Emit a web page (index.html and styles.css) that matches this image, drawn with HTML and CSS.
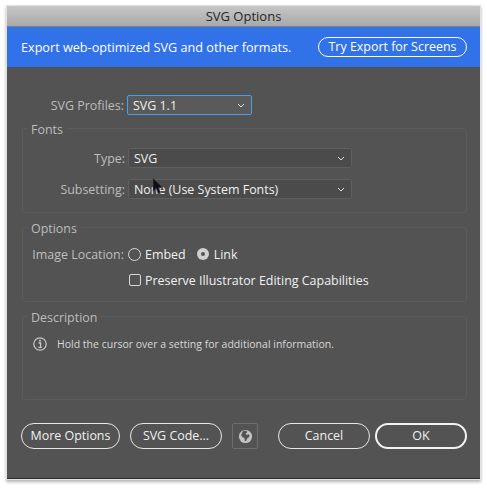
FILE: index.html
```html
<!DOCTYPE html>
<html lang="en">
<head>
<meta charset="utf-8">
<title>SVG Options</title>
<link rel="stylesheet" href="styles.css">
</head>
<body>
<div class="window">
  <div class="titlebar">SVG Options</div>
  <div class="banner">
    <span class="banner-text">Export web-optimized SVG and other formats.</span>
    <span class="banner-btn">Try Export for Screens</span>
  </div>
  <div class="content">
    <div class="row profile-row">
      <span class="label">SVG Profiles:</span>
      <div class="select select-short select-focus"><span>SVG 1.1</span><svg class="chev" viewBox="0 0 8 5"><path d="M1 1l3 3 3-3"/></svg></div>
    </div>
    <section class="group group-fonts">
      <h2 class="legend">Fonts</h2>
      <div class="row">
        <span class="label">Type:</span>
        <div class="select"><span>SVG</span><svg class="chev" viewBox="0 0 8 5"><path d="M1 1l3 3 3-3"/></svg></div>
      </div>
      <div class="row row-second">
        <span class="label">Subsetting:</span>
        <div class="select"><span>None (Use System Fonts)</span><svg class="chev" viewBox="0 0 8 5"><path d="M1 1l3 3 3-3"/></svg></div>
      </div>
    </section>
    <section class="group group-options">
      <h2 class="legend">Options</h2>
      <div class="row">
        <span class="label label-dim">Image Location:</span>
        <span class="radio"></span><span class="opt opt-embed">Embed</span>
        <span class="radio radio-on"></span><span class="opt">Link</span>
      </div>
      <div class="row row-check">
        <span class="check"></span><span class="opt">Preserve Illustrator Editing Capabilities</span>
      </div>
    </section>
    <section class="group group-desc">
      <h2 class="legend">Description</h2>
      <div class="info">
        <svg class="info-icon" viewBox="0 0 16 16"><circle cx="8" cy="8" r="6.2"/><path class="info-i" d="M6.6 7h2v4.2M6.4 11.4h3.4"/><circle class="info-dot" cx="8" cy="4.8" r="1"/></svg>
        <span>Hold the cursor over a setting for additional information.</span>
      </div>
    </section>
    <div class="actions">
      <span class="btn btn-more">More Options</span>
      <span class="btn btn-code">SVG Code...</span>
      <span class="globe"><svg viewBox="0 0 16 16"><circle class="globe-sea" cx="8" cy="8" r="7"/><path class="globe-land" d="M5.5 2.2l3.5-.4.8 1.8-1.6 1.2.9 1.5 2.2-.6 1.2 1.6-1.6 2.4-1.3.4-1 3-1.4-.6-.4-3L5 8.7 3.4 6.8 4 4.4z"/></svg></span>
      <span class="btn btn-cancel">Cancel</span>
      <span class="btn btn-ok">OK</span>
    </div>
  </div>
</div>
<svg class="cursor" viewBox="0 0 12 18"><path d="M1 1v13.5l3.2-3 2.1 5 2.3-1-2.1-4.8h4.4z"/></svg>
</body>
</html>
```
FILE: styles.css
```css
* { box-sizing: border-box; }
html, body { margin: 0; padding: 0; }
body {
  width: 487px;
  height: 488px;
  background: #fff;
  padding: 6px 7px 0;
  font-family: "Open Sans", sans-serif;
  font-size: 12.45px;
  overflow: hidden;
  position: relative;
}
.window {
  width: 473px;
  height: 473px;
  background: #535353;
  border-bottom: 1px solid #2b2b2b;
  box-shadow: 0 0 0 1px #e2e2e2, 0 2px 3px 1px rgba(0,0,0,.3);
  display: flex;
  flex-direction: column;
}
.titlebar {
  height: 21px;
  background: linear-gradient(#c6c6c6, #a9a9a9);
  border-bottom: 1px solid #808080;
  color: #262626;
  text-align: center;
  font-size: 13px;
  line-height: 20px;
}
.banner {
  height: 40px;
  background: #3272e8;
  color: #fff;
  display: flex;
  align-items: center;
  justify-content: space-between;
  padding: 0 13px 0 14px;
}
.banner-text { font-size: 12.65px; }
.banner-btn {
  width: 149px;
  height: 20px;
  border: 1px solid #fff;
  border-radius: 10px;
  text-align: center;
  line-height: 17px;
}
.content {
  flex: 1;
  padding: 28px 13px 0 15px;
  color: #e4e4e4;
}
.row { display: flex; align-items: center; height: 20px; }
.label {
  width: 105px;
  padding-right: 3px;
  text-align: right;
  color: #bdbdbd;
  flex: none;
}
.label-dim { padding-right: 4px; }
.select {
  width: 224px;
  height: 20px;
  background: #4b4b4b;
  border: 1px solid #5f5f5f;
  border-radius: 2px;
  color: #f0f0f0;
  display: flex;
  align-items: center;
  justify-content: space-between;
  padding: 0 6px 0 5px;
  line-height: 17px;
}
.select-short { width: 125px; background: #5a5a5a; }
.select-focus { border-color: #4a9de8; }
.chev { width: 8px; height: 5px; fill: none; stroke: #ddd; stroke-width: 1; }
.profile-row { margin-bottom: 13px; }
.group {
  position: relative;
  border: 1px solid #5c5c5c;
  border-radius: 3px;
}
.legend {
  position: absolute;
  top: -8px;
  left: 4px;
  margin: 0;
  padding: 0 4px;
  background: #535353;
  font-size: 12.45px;
  font-weight: 400;
  line-height: 17px;
  color: #bdbdbd;
}
.group-fonts { height: 85px; padding: 19px 0 0; margin-bottom: 14px; }
.group-options { height: 75px; padding: 16px 0 0; margin-bottom: 14px; }
.group-desc { height: 84px; padding: 19px 0 0 9px; margin-bottom: 23px; }
.row-second { margin-top: 11px; }
.row-check { margin-top: 6px; padding-left: 105px; }
.radio {
  width: 13px;
  height: 13px;
  border: 1px solid #d8d8d8;
  border-radius: 50%;
  flex: none;
  margin-right: 4px;
}
.radio-on {
  width: 12px;
  height: 12px;
  background: #d0d0d0;
  border: 0;
  position: relative;
  margin-right: 5px;
}
.radio-on::after {
  content: "";
  position: absolute;
  left: 4px;
  top: 4px;
  width: 4px;
  height: 4px;
  border-radius: 50%;
  background: #535353;
}
.opt { color: #f0f0f0; }
.opt-embed { margin-right: 11px; }
.check {
  width: 12px;
  height: 12px;
  margin-left: 1px;
  margin-right: 4px;
  border: 1px solid #d8d8d8;
  border-radius: 2px;
  flex: none;
}
.info {
  display: flex;
  align-items: center;
  font-size: 10.5px;
  color: #d8d8d8;
  gap: 9px;
}
.info-icon { width: 16px; height: 16px; flex: none; fill: none; stroke: #c8c8c8; stroke-width: 1.2; }
.info-i { stroke-width: 1.3; }
.info-dot { fill: #c8c8c8; stroke: none; }
.actions { display: flex; align-items: center; }
.btn {
  height: 26px;
  border: 1px solid #e8e8e8;
  border-radius: 13px;
  color: #f0f0f0;
  text-align: center;
  line-height: 23px;
  flex: none;
  font-weight: 500;
}
.btn-more { width: 99px; margin-left: -1px; margin-right: 10px; }
.btn-code { width: 92px; margin-right: 10px; }
.globe {
  width: 26px;
  height: 26px;
  border: 1px solid #6e6e6e;
  border-radius: 2px;
  margin-right: 20px;
  display: flex;
  align-items: center;
  justify-content: center;
}
.globe svg { width: 15px; height: 15px; }
.globe-sea { fill: #c4c4c4; }
.globe-land { fill: #535353; }
.btn-cancel { width: 92px; margin-right: 5px; }
.btn-ok { width: 92px; border-width: 2px; border-color: #f2f2f2; line-height: 21px; }
.cursor {
  position: absolute;
  left: 152px;
  top: 177px;
  width: 12px;
  height: 18px;
  fill: #111;
  stroke: #555;
  stroke-width: .5;
}
```
